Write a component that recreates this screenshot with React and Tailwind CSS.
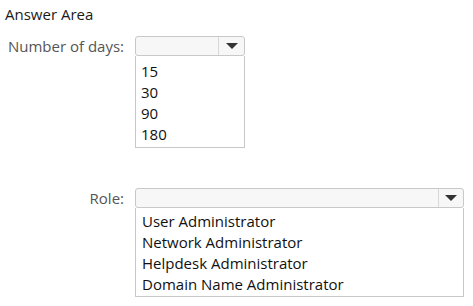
export default function App() {
  const Arrow = () => (
    <svg width="12" height="6" viewBox="0 0 12 6"><path d="M0 0H12L6 6Z" fill="#333" /></svg>
  );
  return (
    <div className="w-[473px] h-[306px] bg-white relative" style={{ fontFamily: '"Open Sans", sans-serif' }}>
      <div className="pl-[5px] pt-[4px] text-[15px] leading-[20px] text-[#1a1a1a]">Answer Area</div>
      <div className="mt-[12px] grid grid-cols-[124px_auto] gap-x-[11px]">
        <div className="text-right text-[15px] leading-[20px] text-[#555]">Number of days:</div>
        <div className="w-[110px]">
          <div className="h-[20px] border border-[#c8c8c8] rounded-[3px] bg-[#f7f7f7] flex">
            <div className="flex-1" />
            <div className="w-[26px] border-l border-[#d8d8d8] flex items-center justify-center"><Arrow /></div>
          </div>
          <div className="h-[92px] border border-t-0 border-[#c8c8c8] pl-[5px] pt-[5px] text-[15px] leading-[21px] text-[#111]">
            <div>15</div><div>30</div><div>90</div><div>180</div>
          </div>
        </div>
        <div className="text-right text-[15px] leading-[20px] text-[#555] mt-[40px]">Role:</div>
        <div className="w-[329px] mt-[40px]">
          <div className="h-[20px] border border-[#c8c8c8] rounded-[3px] bg-[#f7f7f7] flex">
            <div className="flex-1" />
            <div className="w-[25px] border-l border-[#d8d8d8] flex items-center justify-center"><Arrow /></div>
          </div>
          <div className="h-[89px] border border-t-0 border-[#c8c8c8] pl-[6px] pt-[3px] text-[15px] leading-[21px] text-[#111]">
            <div>User Administrator</div><div>Network Administrator</div><div>Helpdesk Administrator</div><div>Domain Name Administrator</div>
          </div>
        </div>
      </div>
    </div>
  );
}
